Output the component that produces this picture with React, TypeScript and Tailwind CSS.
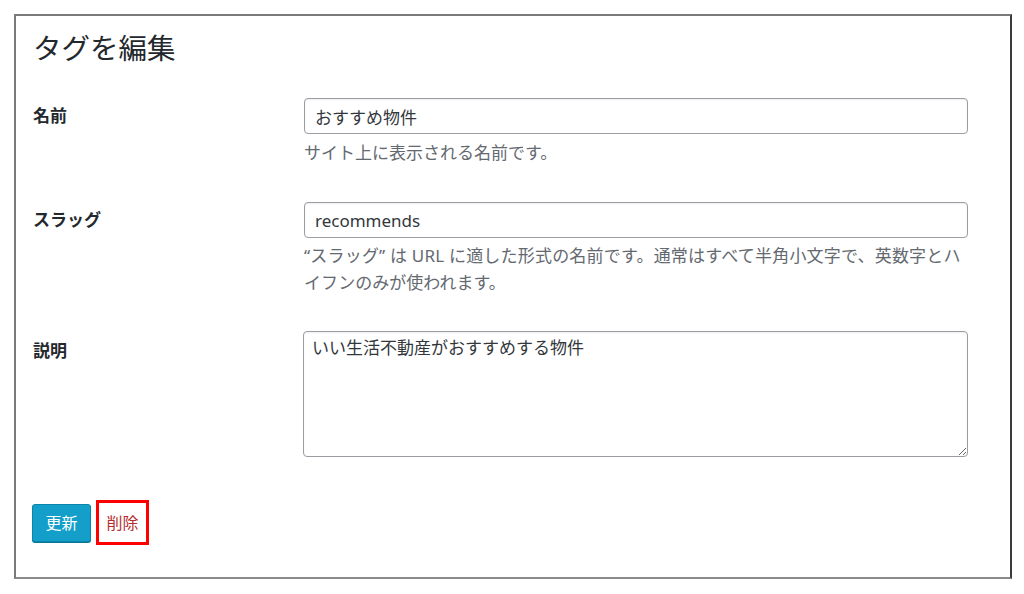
export default function App() {
  const font = { fontFamily: '"Noto Sans", "Noto Sans CJK JP", sans-serif' };
  return (
    <div className="min-h-[594px] w-[1024px] bg-white" style={font}>
      <div className="pt-[14px] pl-[14px]">
        <div className="h-[565px] w-[998px] border-2 border-[#7a7a7a] border-r-[#3a3a3a] border-b-[#8a8a8a] px-[17px] pt-[14px]">
          <h1 className="text-[28.5px] leading-[36px] font-normal text-[#23282d]">タグを編集</h1>

          <div className="mt-[32px] grid grid-cols-[271px_664px]">
            <div className="pt-[4px] text-[17px] leading-[27px] font-bold text-[#23282d]">名前</div>
            <div>
              <input
                readOnly
                value="おすすめ物件"
                className="h-[36px] w-[664px] rounded-[4px] border border-[#9a9ea3] px-[10px] text-[17px] text-[#32373c] shadow-[inset_0_1px_2px_rgba(0,0,0,0.07)] outline-none"
              />
              <p className="mt-[5px] text-[17px] leading-[27px] text-[#646970]">サイト上に表示される名前です。</p>
            </div>
          </div>

          <div className="mt-[36px] grid grid-cols-[271px_664px]">
            <div className="pt-[4px] text-[17px] leading-[27px] font-bold text-[#23282d]">スラッグ</div>
            <div>
              <input
                readOnly
                value="recommends"
                className="h-[36px] w-[664px] rounded-[4px] border border-[#9a9ea3] px-[10px] text-[17px] text-[#32373c] shadow-[inset_0_1px_2px_rgba(0,0,0,0.07)] outline-none"
              />
              <p className="mt-[4px] text-[17px] leading-[27px] text-[#646970]">
                <span className="whitespace-nowrap tracking-[0.2px]">“スラッグ” は URL に適した形式の名前です。通常はすべて半角小文字で、英数字とハ</span>
                <br />
                イフンのみが使われます。
              </p>
            </div>
          </div>

          <div className="mt-[35px] grid grid-cols-[270px_665px]">
            <div className="pt-[6px] text-[17px] leading-[27px] font-bold text-[#23282d]">説明</div>
            <div>
              <textarea
                readOnly
                value="いい生活不動産がおすすめする物件"
                className="block h-[126px] w-[665px] resize-y rounded-[4px] border border-[#9a9ea3] px-[8px] py-[2px] text-[17px] leading-[27px] text-[#32373c] shadow-[inset_0_1px_2px_rgba(0,0,0,0.07)] outline-none"
              />
            </div>
          </div>

          <div className="mt-[43px] flex items-center">
            <button
              type="button"
              className="-ml-px h-[38px] w-[59px] rounded-[3px] border border-[#0a86ab] bg-[#139fca] text-[16px] text-white shadow-[0_1px_0_#0a7797]"
            >
              更新
            </button>
            <div className="ml-[5px] flex h-[45px] w-[53px] items-center justify-center border-[3px] border-[#ff0000]">
              <a className="text-[16px] text-[#b32d2e]">削除</a>
            </div>
          </div>
        </div>
      </div>
    </div>
  );
}
